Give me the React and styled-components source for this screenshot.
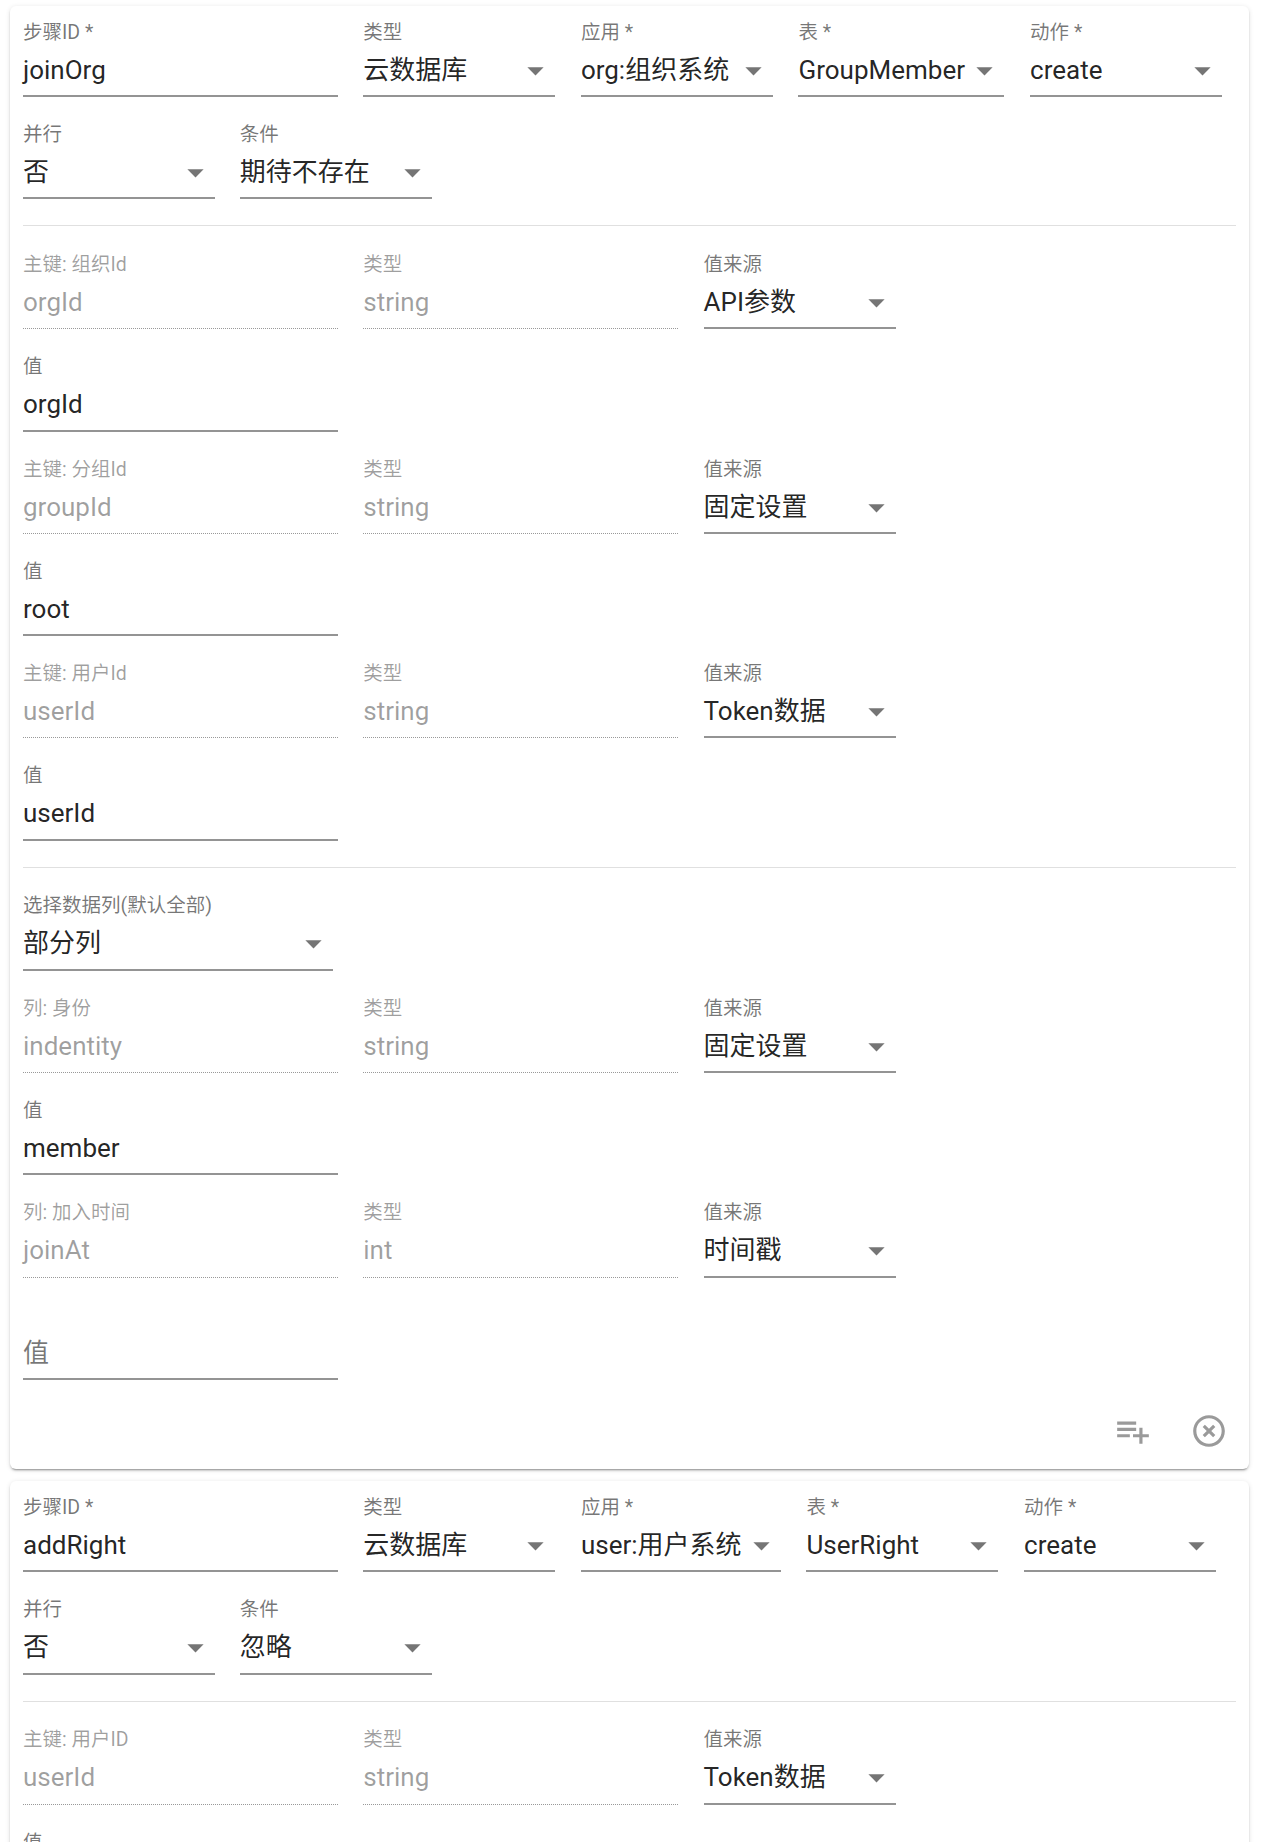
import React from 'react';
import styled, { createGlobalStyle } from 'styled-components';

const GlobalStyle = createGlobalStyle`
  html, body {
    margin: 0;
    height: 1842px;
    overflow: hidden;
    background: #fff;
  }
  body {
    font-family: Roboto, "Noto Sans CJK SC", sans-serif;
  }
`
const Page = styled.div`
  display: flex;
  flex-direction: column;
  gap: 12px;
  padding: 6px 30px 0 9.5px;
  height: 1842px;
  box-sizing: border-box;
  overflow: hidden;
`
const Card = styled.div`
  flex-shrink: 0;
  padding: 12.7px 13px 0 13.5px;
  background: #fff;
  border-radius: 6px;
  box-shadow: 0 3px 1px -2px rgba(0, 0, 0, 0.2), 0 2px 2px 0 rgba(0, 0, 0, 0.14), 0 1px 5px 0 rgba(0, 0, 0, 0.12);
`
const Row = styled.div`
  display: flex;
  column-gap: ${p => p.$gap || 25.6}px;
`
const Divider = styled.hr`
  height: 1px;
  margin: 2px 0 24.7px;
  border: none;
  background: #e0e0e0;
`
const FieldBox = styled.div`
  display: flex;
  flex-direction: column;
  flex-shrink: 0;
  width: ${p => p.$width}px;
  height: 78.3px;
  margin-bottom: 24px;
`
const Label = styled.label`
  height: 25px;
  font-size: 19.5px;
  line-height: 27px;
  color: rgba(0, 0, 0, ${p => (p.$disabled ? 0.38 : 0.54)});
  white-space: nowrap;
`
const Control = styled.div`
  position: relative;
  flex: 1;
  padding-top: 8px;
  box-sizing: border-box;
  font-size: 26px;
  line-height: 36px;
  color: ${p => (p.$disabled ? 'rgba(0, 0, 0, 0.38)' : 'rgba(0, 0, 0, 0.87)')};
  border-bottom: ${p => (p.$disabled ? '1px dotted rgba(0, 0, 0, 0.4)' : '2px solid rgba(0, 0, 0, 0.42)')};
  white-space: nowrap;
`
const Placeholder = styled.span`
  color: rgba(0, 0, 0, 0.54);
`
const Caret = styled.svg`
  position: absolute;
  right: 0;
  top: 7px;
  width: 39px;
  height: 39px;
  fill: rgba(0, 0, 0, 0.54);
`
const Actions = styled.div`
  display: flex;
  justify-content: flex-end;
  align-items: center;
  gap: 38px;
  margin-top: 8.5px;
  padding: 0 8.5px 19px 0;
`
const ActionIcon = styled.svg`
  width: 38px;
  height: 38px;
  fill: #9a9a9a;
`

const PLAYLIST_ADD = 'M14 10H2v2h12v-2zm0-4H2v2h12V6zm4 8v-4h-2v4h-4v2h4v4h2v-4h4v-2h-4zM2 16h8v-2H2v2z'
const HIGHLIGHT_OFF = 'M14.59 8L12 10.59 9.41 8 8 9.41 10.59 12 8 14.59 9.41 16 12 13.41 14.59 16 16 14.59 13.41 12 16 9.41 14.59 8zM12 2C6.47 2 2 6.47 2 12s4.47 10 10 10 10-4.47 10-10S17.53 2 12 2zm0 18c-4.41 0-8-3.59-8-8s3.59-8 8-8 8 3.59 8 8-3.59 8-8 8z'

function TextField({ label, value, width = 314.7, disabled, placeholder }) {
  return (
    <FieldBox $width={width}>
      <Label $disabled={disabled}>{label}</Label>
      <Control $disabled={disabled}>
        {placeholder ? <Placeholder>{placeholder}</Placeholder> : value}
      </Control>
    </FieldBox>
  )
}

function SelectField({ label, value, width = 192 }) {
  return (
    <FieldBox $width={width}>
      <Label>{label}</Label>
      <Control>
        {value}
        <Caret viewBox="0 0 24 24"><path d="M7 10l5 5 5-5z" /></Caret>
      </Control>
    </FieldBox>
  )
}

function ParamRows({ label, name, type, source, value, placeholder }) {
  return (
    <>
      <Row>
        <TextField label={label} value={name} disabled />
        <TextField label="类型" value={type} disabled />
        <SelectField label="值来源" value={source} />
      </Row>
      <Row>
        <TextField label={placeholder ? '' : '值'} value={value} placeholder={placeholder} />
      </Row>
    </>
  )
}

function App() {
  return (
    <Page>
      <GlobalStyle />
      <Card>
        <Row>
          <TextField label="步骤ID *" value="joinOrg" />
          <SelectField label="类型" value="云数据库" />
          <SelectField label="应用 *" value="org:组织系统" />
          <SelectField label="表 *" value="GroupMember" width={206} />
          <SelectField label="动作 *" value="create" />
        </Row>
        <Row $gap={24.8}>
          <SelectField label="并行" value="否" />
          <SelectField label="条件" value="期待不存在" />
        </Row>
        <Divider />
        <ParamRows label="主键: 组织Id" name="orgId" type="string" source="API参数" value="orgId" />
        <ParamRows label="主键: 分组Id" name="groupId" type="string" source="固定设置" value="root" />
        <ParamRows label="主键: 用户Id" name="userId" type="string" source="Token数据" value="userId" />
        <Divider />
        <Row>
          <SelectField label="选择数据列(默认全部)" value="部分列" width={309.5} />
        </Row>
        <ParamRows label="列: 身份" name="indentity" type="string" source="固定设置" value="member" />
        <ParamRows label="列: 加入时间" name="joinAt" type="int" source="时间戳" placeholder="值" />
        <Actions>
          <ActionIcon viewBox="0 0 24 24"><path d={PLAYLIST_ADD} /></ActionIcon>
          <ActionIcon viewBox="0 0 24 24"><path d={HIGHLIGHT_OFF} /></ActionIcon>
        </Actions>
      </Card>
      <Card>
        <Row>
          <TextField label="步骤ID *" value="addRight" />
          <SelectField label="类型" value="云数据库" />
          <SelectField label="应用 *" value="user:用户系统" width={200} />
          <SelectField label="表 *" value="UserRight" />
          <SelectField label="动作 *" value="create" />
        </Row>
        <Row $gap={24.8}>
          <SelectField label="并行" value="否" />
          <SelectField label="条件" value="忽略" />
        </Row>
        <Divider />
        <ParamRows label="主键: 用户ID" name="userId" type="string" source="Token数据" value="userId" />
      </Card>
    </Page>
  )
}

export default App;
